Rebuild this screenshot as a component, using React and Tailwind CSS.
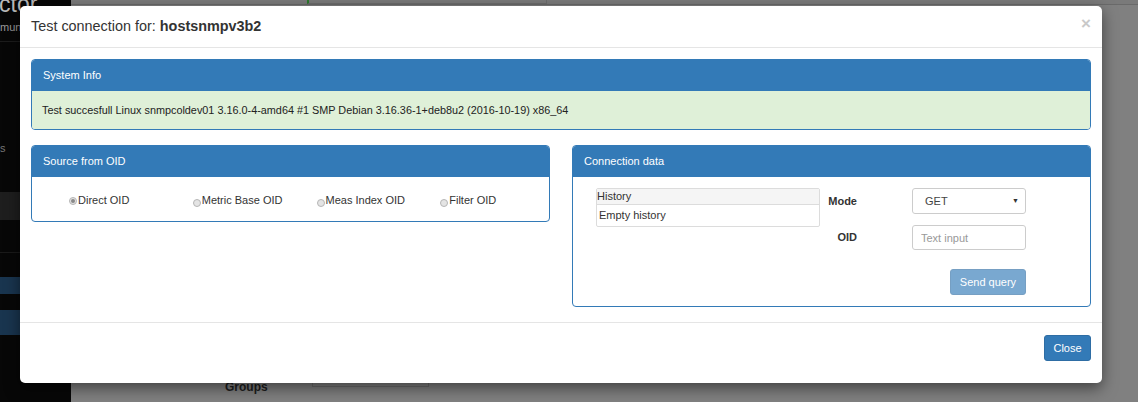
import React from 'react';

const font = { fontFamily: '"Liberation Sans", Arial, sans-serif' };

function Panel({ title, children, className = '' }) {
  return (
    <div className={`border border-[#337ab7] rounded-[4px] overflow-hidden bg-white ${className}`}>
      <div className="bg-[#337ab7] text-white text-[11px] h-[31px] px-[11px] flex items-center">{title}</div>
      {children}
    </div>
  );
}

function Radio({ label, checked }) {
  return (
    <div className="flex items-center pl-[26px] text-[11px] text-[#333]">
      <span
        className={`w-[8px] h-[8px] rounded-full border border-[#b5b5b5] bg-[#e4e4e4] flex items-center justify-center ${
          checked ? '' : 'translate-y-[2px]'
        }`}
      >
        {checked && <span className="w-[4px] h-[4px] rounded-full bg-[#8a8a8a]" />}
      </span>
      <span className="ml-[1px]">{label}</span>
    </div>
  );
}

export default function App() {
  return (
    <div className="relative w-[1138px] h-[402px] overflow-hidden bg-[#808080]" style={font}>
      {/* page behind the backdrop */}
      <div className="flex h-full">
        <div className="w-[71px] h-full bg-[#070707] flex flex-col">
          <div className="h-[14px]">
            <div className="text-[23px] leading-none text-[#b9b9b9] -mt-[7px] -ml-[1px] whitespace-nowrap">ctor</div>
          </div>
          <div className="h-[14px] leading-[14px] text-[11px] text-[#9a9a9a] mt-[6px] whitespace-nowrap">munications</div>
          <div className="h-px bg-[#1c1c1c] mt-[7px]" />
          <div className="h-[12px] leading-[12px] text-[11px] text-[#777] mt-[100px]">s</div>
          <div className="h-[28px] bg-[#1e1e1e] mt-[38px]" />
          <div className="h-px bg-[#1a1a1a] mt-[32px]" />
          <div className="h-[17px] bg-[#19354f] mt-[24px]" />
          <div className="h-[25px] bg-[#19354f] mt-[16px]" />
        </div>
        <div className="flex-1 relative">
          <div className="h-[5px] bg-[#7a7a7a] border-b border-[#6a6a6a] flex">
            <div className="ml-[236px] w-[240px] h-[4px] border border-t-0 border-[#6c6c6c] border-l-2 border-l-[#2b7a2b]" />
          </div>
          <div className="absolute left-[154px] top-[378px] text-[12px] font-bold text-[#1e1e1e]">Groups</div>
          <div className="absolute left-[241px] top-[383px] w-[117px] h-[4px] border border-t-0 border-[#6c6c6c]" />
        </div>
      </div>

      {/* modal */}
      <div className="absolute left-[20px] top-[6px] w-[1082px] h-[377px] bg-white rounded-[5px] shadow-[0_5px_15px_rgba(0,0,0,0.5)] flex flex-col">
        <div className="h-[42px] border-b border-[#e5e5e5] pl-[11px] pr-[12px] flex items-center justify-between shrink-0">
          <div className="text-[14.4px] text-[#333] pt-[1px]">
            Test connection for: <b>hostsnmpv3b2</b>
          </div>
          <div className="text-[17px] leading-none font-bold text-[#c9c9c9] -mt-[6px] mr-[-1px]">×</div>
        </div>

        <div className="h-[274px] px-[11px] pt-[11px] shrink-0">
          <Panel title="System Info">
            <div className="bg-[#dff0d8] h-[38px] px-[10px] flex items-center text-[10.85px] text-[#222]">
              Test succesfull Linux snmpcoldev01 3.16.0-4-amd64 #1 SMP Debian 3.16.36-1+deb8u2 (2016-10-19) x86_64
            </div>
          </Panel>

          <div className="grid grid-cols-2 gap-[22px] items-start mt-[15px]">
            <Panel title="Source from OID">
              <div className="h-[44px] pt-[3px] px-[11px] grid grid-cols-4 items-center">
                <Radio label="Direct OID" checked />
                <Radio label="Metric Base OID" />
                <Radio label="Meas Index OID" />
                <Radio label="Filter OID" />
              </div>
            </Panel>

            <Panel title="Connection data">
              <div className="flex items-start justify-between pl-[23px] pr-[64px] pt-[11px] pb-[11px]">
                <div className="w-[224px] border border-[#dcdcdc] rounded-[2px] text-[11px] text-[#333]">
                  <div className="h-[16px] bg-[#f5f5f5] border-b border-[#dcdcdc] flex items-center">History</div>
                  <div className="h-[21px] flex items-center pl-[2px]">Empty history</div>
                </div>
                <div className="w-[199px] flex flex-col">
                  <div className="h-[26px] flex items-center">
                    <div className="w-[30px] text-right text-[11px] font-bold text-[#333]">Mode</div>
                    <div className="ml-auto w-[114px] h-[26px] border border-[#ccc] rounded-[3px] flex items-center justify-between pl-[12px] pr-[6px] text-[11px] text-[#444]">
                      <span>GET</span>
                      <span className="text-[7px] text-[#333]">▼</span>
                    </div>
                  </div>
                  <div className="h-[25px] flex items-center mt-[11px]">
                    <div className="w-[30px] text-right text-[11px] font-bold text-[#333]">OID</div>
                    <input
                      placeholder="Text input"
                      className="ml-auto w-[114px] h-[25px] border border-[#ccc] rounded-[3px] px-[8px] text-[11px] text-[#555] placeholder-[#999] outline-none"
                      style={font}
                    />
                  </div>
                  <button
                    disabled
                    className="self-end mt-[19px] w-[76px] h-[26px] rounded-[3px] bg-[#337ab7] opacity-65 border border-[#2e6da4] text-white text-[11px]"
                    style={font}
                  >
                    Send query
                  </button>
                </div>
              </div>
            </Panel>
          </div>
        </div>

        <div className="border-t border-[#e5e5e5] flex-1 flex justify-end items-start pt-[12px] pr-[11px]">
          <button className="w-[47px] h-[26px] rounded-[3px] bg-[#337ab7] border border-[#2e6da4] text-white text-[11px]" style={font}>
            Close
          </button>
        </div>
      </div>
    </div>
  );
}
